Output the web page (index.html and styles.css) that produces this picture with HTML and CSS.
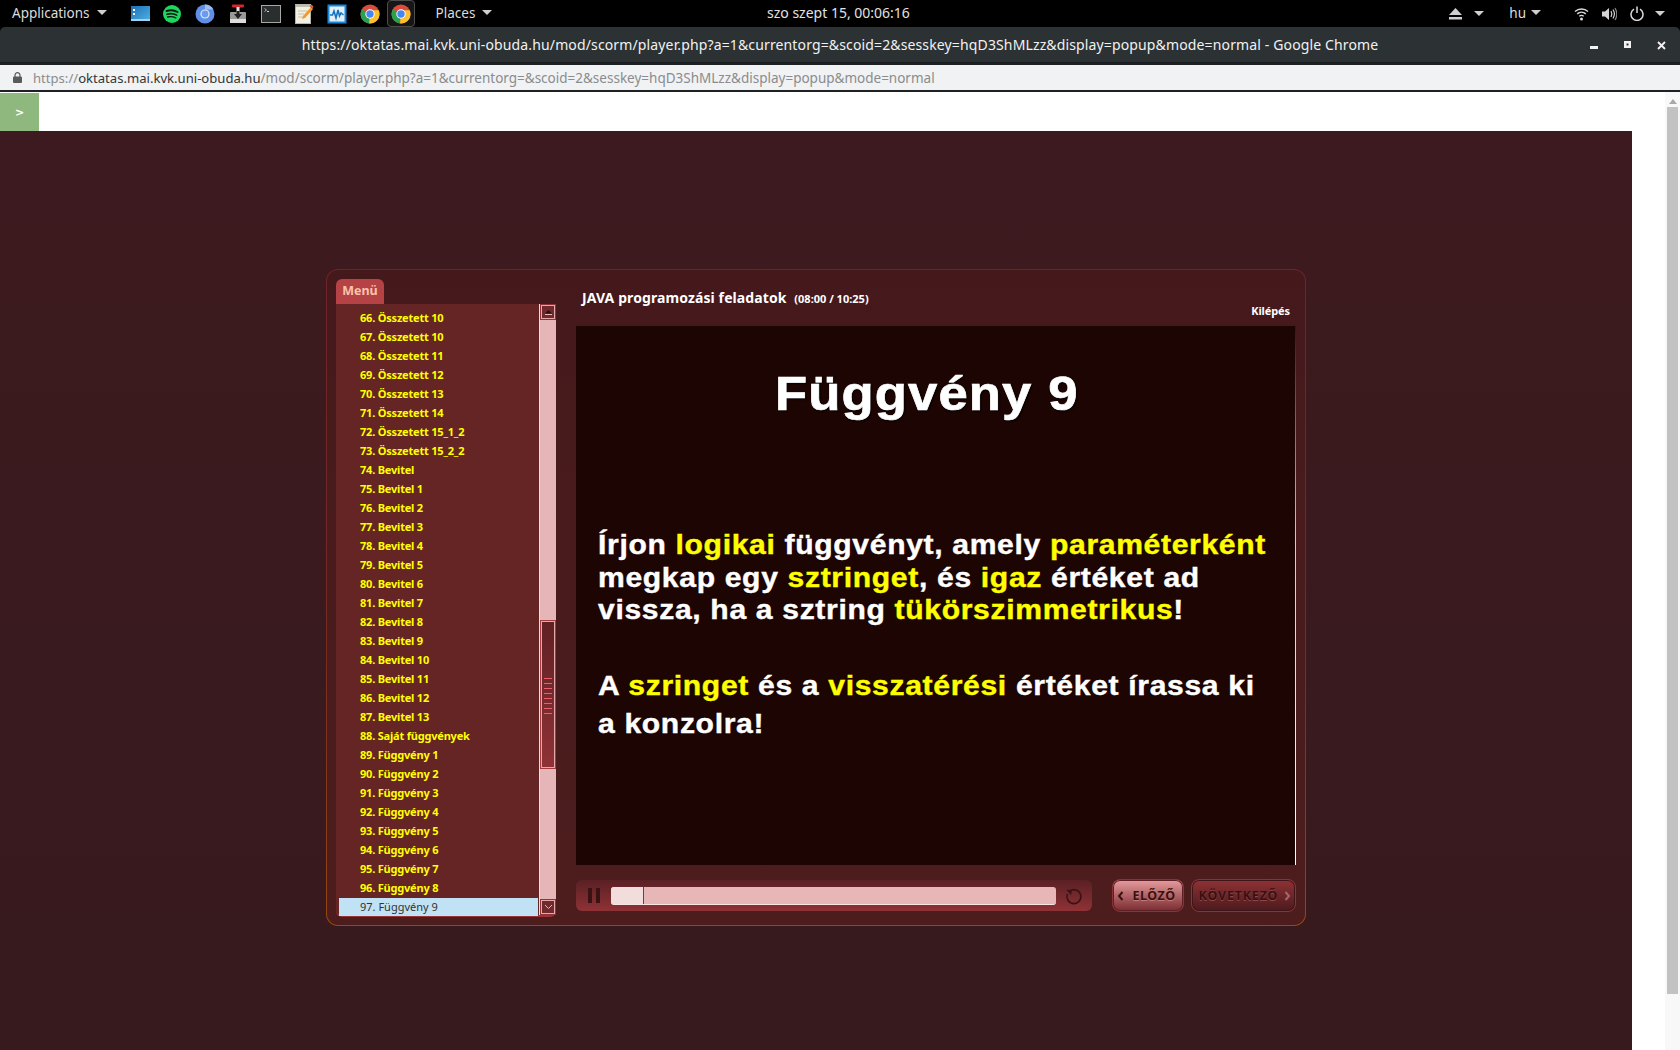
FILE: index.html
```html
<!DOCTYPE html>
<html lang="hu">
<head>
<meta charset="utf-8">
<title>Függvény 9</title>
<link rel="stylesheet" href="styles.css">
</head>
<body>
<header class="topbar">
  <div class="topbar-left">
    <span class="shell-menu">Applications <i class="caret"></i></span>
    <div class="launcher">
      <span class="app app-first"><svg width="20" height="18" viewBox="0 0 20 18"><defs><linearGradient id="fm" x1="0" y1="0" x2="1" y2="1"><stop offset="0" stop-color="#1c6fb5"/><stop offset="1" stop-color="#4fb2e6"/></linearGradient></defs><rect x="0" y="1" width="19" height="15" fill="url(#fm)"/><rect x="0" y="14" width="19" height="2" fill="#9fd3ee"/><rect x="2" y="4" width="2" height="2" fill="#fff"/><rect x="2" y="8" width="2" height="2" fill="#fff"/></svg></span>
      <span class="app"><svg width="20" height="20" viewBox="0 0 20 20"><circle cx="10" cy="10" r="9" fill="#1ed760"/><g fill="none" stroke="#0b1a10" stroke-linecap="round"><path d="M4.500 7C8 6 12.500 6.200 15.500 8" stroke-width="1.900"/><path d="M5 10.200C8 9.400 12 9.700 14.700 11.100" stroke-width="1.600"/><path d="M5.600 13C8 12.400 11.300 12.600 13.800 13.900" stroke-width="1.300"/></g></svg></span>
      <span class="app"><svg width="20" height="20" viewBox="0 0 20 20"><circle cx="10" cy="10" r="9.500" fill="#5f8fe6"/><path d="M10 .5a9.500 9.500 0 0 1 8.300 5H10z" fill="#9dbdf3"/><circle cx="10" cy="10" r="4.600" fill="#dfe9fb"/><circle cx="10" cy="10" r="3.400" fill="#6b9cec"/></svg></span>
      <span class="app"><svg width="20" height="20" viewBox="0 0 20 20"><rect x="2" y="8" width="16" height="11" rx="1" fill="#9a9a96"/><rect x="2" y="15" width="16" height="4" fill="#ddd"/><rect x="4" y="0.500" width="12" height="3" rx="1" fill="#d8262c"/><rect x="8.500" y="3" width="3" height="6" fill="#e3e3e0"/><path d="M6 10h2.500V7h3v3H14l-4 5z" fill="#222"/></svg></span>
      <span class="app"><svg width="20" height="20" viewBox="0 0 20 20"><rect x="0.500" y="1.500" width="19" height="17" fill="#2a2e2e" stroke="#a6a8a6"/><path d="M3.500 4.500l2 1.500-2 1.500" fill="none" stroke="#cfd3d0" stroke-width=".8"/><rect x="6" y="7" width="2" height="1" fill="#cfd3d0"/></svg></span>
      <span class="app"><svg width="20" height="22" viewBox="0 0 20 22"><rect x="1.500" y="1.500" width="15" height="19" fill="#f2efe3" stroke="#b9b5a6"/><path d="M1.500 3h15" stroke="#8d8a80" stroke-width="2" stroke-dasharray="1 1"/><path d="M4 8h9M4 11h6M4 14h5" stroke="#c7c3b2"/><path d="M8 16l1-3 8-9 2 2-8 9z" fill="#ee9b2c"/><path d="M15.500 3l2-1.500 2 2-1 2z" fill="#e0584a"/></svg></span>
      <span class="app"><svg width="20" height="20" viewBox="0 0 20 20"><rect x="0.500" y="0.500" width="19" height="19" fill="#1b86d8"/><rect x="2.500" y="2.500" width="15" height="15" fill="#dff0fb"/><path d="M3 11h2.500l1.500-4 2 7 2-8 1.500 6 1.500-3 2.500 2" fill="none" stroke="#1573bd" stroke-width="1.600"/></svg></span>
      <span class="app"><svg width="20" height="20" viewBox="0 0 20 20"><use href="#chrome"/></svg></span>
      <span class="app app-active"><svg width="20" height="20" viewBox="0 0 20 20"><use href="#chrome"/></svg></span>
    </div>
    <span class="shell-menu places">Places <i class="caret"></i></span>
  </div>
  <div class="clock">szo szept 15, 00:06:16</div>
  <div class="topbar-right">
    <span class="tray-item tray-eject"><svg width="13" height="12" viewBox="0 0 13 12"><path d="M6.500 0L13 7H0z" fill="#cfcfcf"/><rect y="9" width="13" height="2.500" fill="#cfcfcf"/></svg><i class="caret"></i></span>
    <span class="tray-item lang">hu <i class="caret"></i></span>
    <span class="tray-item tray-sys">
      <svg width="15" height="14" viewBox="0 0 15 14"><g fill="none" stroke="#dcdcdc" stroke-width="1.400"><path d="M1 4.500c3.700-3.300 9.300-3.300 13 0"/><path d="M3.200 6.900c2.500-2.200 6.100-2.200 8.600 0"/><path d="M5.300 9.200c1.300-1 3.100-1 4.400 0"/></g><circle cx="7.500" cy="12" r="1.500" fill="#dcdcdc"/></svg>
      <svg width="15" height="14" viewBox="0 0 15 14"><path d="M0 4.500h3L7 1v12L3 9.500H0z" fill="#d4d4d4"/><g fill="none" stroke="#d4d4d4" stroke-width="1.200"><path d="M9 4c1 1.800 1 4.200 0 6"/><path d="M11 2.500c1.700 2.700 1.700 6.300 0 9"/><path d="M13 1c2.200 3.600 2.200 8.400 0 12" stroke="#888"/></g></svg>
      <span class="power"><svg width="14" height="15" viewBox="0 0 14 15"><path d="M4 3.200a6 6 0 1 0 6 0" fill="none" stroke="#dcdcdc" stroke-width="1.500"/><path d="M7 0.500v6.500" stroke="#dcdcdc" stroke-width="1.500"/></svg><i class="caret"></i></span>
    </span>
  </div>
</header>

<div class="titlebar">
  <div class="window-title">https://oktatas.mai.kvk.uni-obuda.hu/mod/scorm/player.php?a=1&amp;currentorg=&amp;scoid=2&amp;sesskey=hqD3ShMLzz&amp;display=popup&amp;mode=normal - Google Chrome</div>
  <div class="window-buttons">
    <svg width="8" height="8" viewBox="0 0 8 8"><rect y="5" width="8" height="3" fill="#f2f2f2"/></svg>
    <svg width="7" height="7" viewBox="0 0 7 7"><rect width="7" height="7" fill="#f2f2f2"/><rect x="2.500" y="2.500" width="2" height="2" fill="#2c3134"/></svg>
    <svg width="9" height="9" viewBox="0 0 9 9"><path d="M1 1l7 7M8 1L1 8" stroke="#f2f2f2" stroke-width="1.800"/></svg>
  </div>
</div>

<div class="addressbar">
  <svg class="lock" width="9" height="11" viewBox="0 0 9 11"><path d="M2 5V3.200a2.500 2.500 0 0 1 5 0V5" fill="none" stroke="#5a5a5a" stroke-width="1.200"/><rect y="4.500" width="9" height="6.500" rx="1" fill="#5a5a5a"/></svg>
  <span class="url"><span class="url-dim url-scheme">https://</span><span class="url-host">oktatas.mai.kvk.uni-obuda.hu</span><span class="url-dim">/mod/scorm/player.php?a=1&amp;currentorg=&amp;scoid=2&amp;sesskey=hqD3ShMLzz&amp;display=popup&amp;mode=normal</span></span>
</div>

<div class="viewport">
  <main class="page">
    <div class="toc-strip"><button class="toc-toggle">&gt;</button></div>
    <div class="stage">
      <section class="player">
        <aside class="menu">
          <div class="menu-tab">Menü</div>
          <div class="menu-box">
            <ul class="menu-list">
              <li>66. Összetett 10</li><li>67. Összetett 10</li><li>68. Összetett 11</li><li>69. Összetett 12</li>
              <li>70. Összetett 13</li><li>71. Összetett 14</li><li>72. Összetett 15_1_2</li><li>73. Összetett 15_2_2</li>
              <li>74. Bevitel</li><li>75. Bevitel 1</li><li>76. Bevitel 2</li><li>77. Bevitel 3</li>
              <li>78. Bevitel 4</li><li>79. Bevitel 5</li><li>80. Bevitel 6</li><li>81. Bevitel 7</li>
              <li>82. Bevitel 8</li><li>83. Bevitel 9</li><li>84. Bevitel 10</li><li>85. Bevitel 11</li>
              <li>86. Bevitel 12</li><li>87. Bevitel 13</li><li>88. Saját függvények</li><li>89. Függvény 1</li>
              <li>90. Függvény 2</li><li>91. Függvény 3</li><li>92. Függvény 4</li><li>93. Függvény 5</li>
              <li>94. Függvény 6</li><li>95. Függvény 7</li><li>96. Függvény 8</li><li class="current">97. Függvény 9</li>
            </ul>
            <div class="menu-scroll">
              <span class="menu-arrow"><svg width="9" height="6" viewBox="0 0 9 6"><path d="M4.500 1L8 4.500H1z" fill="#2d0d0f"/><path d="M1 5.500h7" stroke="#e6b8b8"/></svg></span>
              <div class="menu-track">
                <div class="menu-thumb"><span class="grip"></span></div>
              </div>
              <span class="menu-arrow"><svg width="9" height="6" viewBox="0 0 9 6"><path d="M1 1l3.500 3.500L8 1" fill="none" stroke="#e6b8b8" stroke-width="1"/></svg></span>
            </div>
          </div>
        </aside>
        <div class="lesson">
          <div class="lesson-head">
            <h1 class="lesson-title">JAVA programozási feladatok <small>(08:00 / 10:25)</small></h1>
            <a class="exit">Kilépés</a>
          </div>
          <div class="slide">
            <h2 class="slide-title">Függvény 9</h2>
            <p class="slide-p1">Írjon <b>logikai</b> függvényt, amely <b>paraméterként</b><br>megkap egy <b>sztringet</b>, és <b>igaz</b> értéket ad<br>vissza, ha a sztring <b>tükörszimmetrikus</b>!</p>
            <p class="slide-p2">A <b>szringet</b> és a <b>visszatérési</b> értéket írassa ki<br>a konzolra!</p>
          </div>
          <div class="controls">
            <div class="playbar">
              <span class="pause"><i></i><i></i></span>
              <div class="progress"><div class="progress-fill"></div></div>
              <svg class="reload" width="18" height="18" viewBox="0 0 18 18"><path d="M5.500 3.500A7 7 0 1 1 2.400 7" fill="none" stroke="#3b1214" stroke-width="1.600"/><path d="M1 3h5.500v5z" fill="#3b1214" transform="rotate(8 4 5)"/></svg>
            </div>
            <button class="nav nav-prev"><svg width="7" height="10" viewBox="0 0 7 10"><path d="M5.500 1L2 5l3.500 4" fill="none" stroke="#3b1012" stroke-width="2"/></svg>ELŐZŐ</button>
            <button class="nav nav-next">KÖVETKEZŐ<svg width="7" height="10" viewBox="0 0 7 10"><path d="M1.500 1L5 5 1.500 9" fill="none" stroke="#a0686a" stroke-width="2"/></svg></button>
          </div>
        </div>
      </section>
    </div>
  </main>
  <div class="page-gap"></div>
  <div class="page-scroll">
    <svg width="8" height="7" viewBox="0 0 8 7"><path d="M4 1l4 5H0z" fill="#a8a8a8"/></svg>
    <div class="page-thumb"></div>
  </div>
</div>

<svg class="defs" width="0" height="0"><defs>
  <g id="chrome">
    <circle cx="10" cy="10" r="9.500" fill="#dd4b3e"/>
    <path d="M10 10L1.800 5.200A9.500 9.500 0 0 0 9 19.450z" fill="#2aa14f"/>
    <path d="M10 10L9 19.450A9.500 9.500 0 0 0 18.800 6.300H10z" fill="#fbc02d"/>
    <circle cx="10" cy="10" r="4.700" fill="#fff"/>
    <circle cx="10" cy="10" r="3.700" fill="#4586f3"/>
  </g>
</defs></svg>
</body>
</html>
```

FILE: styles.css
```css
* { box-sizing: border-box; }
html, body { margin: 0; padding: 0; height: 100%; }
body {
  width: 1680px;
  height: 1050px;
  overflow: hidden;
  display: flex;
  flex-direction: column;
  background: #000;
  font-family: "Noto Sans", sans-serif;
}

/* shell */
.topbar {
  height: 27px;
  flex: none;
  background: #000;
  color: #dcdcdc;
  font-size: 13.5px;
  display: flex;
  align-items: center;
  position: relative;
}
.topbar-left { display: flex; align-items: center; padding-left: 12px; }
.shell-menu { display: flex; align-items: center; gap: 7px; white-space: nowrap; margin-top: -2px; }
.places { margin-left: 21px; }
.caret {
  display: inline-block;
  width: 0;
  height: 0;
  border-left: 5px solid transparent;
  border-right: 5px solid transparent;
  border-top: 5px solid #cfcfcf;
}
.launcher { display: flex; align-items: center; margin-left: 20px; }
.app {
  width: 33px;
  height: 27px;
  display: flex;
  align-items: center;
  justify-content: center;
}
.app-first { width: 29px; }
.app-active {
  width: 28px;
  border: 1px solid #4d4d4d;
  border-radius: 4px;
  background: #161616;
}
.clock { position: absolute; left: 767px; top: 3px; font-size: 14px; white-space: nowrap; color: #e2e2e2; }
.topbar-right { margin-left: auto; display: flex; align-items: center; padding-right: 15px; }
.tray-item { display: flex; align-items: center; gap: 11px; }
.tray-eject { gap: 12px; }
.lang { margin-left: 25px; gap: 5px; margin-top: -2px; }
.tray-sys { margin-left: 33px; gap: 13px; margin-top: 0; }
.power { display: flex; align-items: center; gap: 11px; }

.titlebar {
  height: 36px;
  flex: none;
  background: #2c3134;
  border-radius: 5px 5px 0 0;
  color: #f1f1f1;
  font-size: 14px;
  letter-spacing: .135px;
  position: relative;
  display: flex;
  align-items: center;
  justify-content: center;
  border-bottom: 1px solid #1a1d1f;
}
.window-title { white-space: nowrap; }
.window-buttons {
  position: absolute;
  right: 14px;
  top: 14px;
  display: flex;
  align-items: flex-start;
  gap: 26px;
}

.addressbar {
  height: 29px;
  flex: none;
  background: #f1f2f4;
  border-top: 2px solid #1e2123;
  border-bottom: 2px solid #1e2123;
  display: flex;
  align-items: center;
  padding-left: 13px;
  font-size: 13.5px;
}
.lock { margin-right: 11px; }
.url { white-space: nowrap; }
.url-dim { color: #8a8c8e; }
.url-scheme, .url-host { font-size: 13.1px; }
.url-host { color: #33363a; }

/* page */
.viewport { flex: 1; min-height: 0; display: flex; background: #fff; }
.page { width: 1632px; flex: none; display: flex; flex-direction: column; }
.page-gap { flex: 1; }
.page-scroll {
  width: 15px;
  flex: none;
  background: #f8f8f8;
  display: flex;
  flex-direction: column;
  align-items: center;
  padding-top: 6px;
  gap: 2px;
}
.page-thumb { width: 11px; height: 887px; background: #c2c2c2; }
.toc-strip { height: 39px; flex: none; background: #fff; padding-top: 1px; }
.toc-toggle {
  display: block;
  width: 39px;
  height: 38px;
  padding: 0;
  border: 0;
  background: #8fb87e;
  color: #fff;
  font: bold 11px "DejaVu Sans", sans-serif;
}
.stage {
  flex: 1;
  background: linear-gradient(#3d1a1f, #371a1e);
  padding: 138px 0 0 326px;
}

.player {
  width: 980px;
  height: 657px;
  display: flex;
  background: linear-gradient(#45191c, #4d1d1d) padding-box, linear-gradient(#6d2429 0, #7a2c22 60%, #97480f 100%) border-box;
  border: 1px solid transparent;
  border-radius: 12px;
  padding: 9px 9px 8px 9px;
}

/* menu */
.menu { width: 220px; flex: none; display: flex; flex-direction: column; }
.menu-tab {
  width: 48px;
  height: 25px;
  flex: none;
  background: #b54245;
  border-radius: 6px 6px 0 0;
  color: #f8c4ab;
  font: bold 12.5px/24px "Noto Sans", sans-serif;
  text-align: center;
}
.menu-box {
  flex: 1;
  min-height: 0;
  display: flex;
  background: #662525;
  border-radius: 0 0 6px 6px;
  border-bottom: 2px solid #9a3438;
}
.menu-list {
  width: 204px;
  flex: none;
  margin: 0;
  padding: 5px 1px 0 3px;
  list-style: none;
  border-right: 1px solid #f5dddd;
}
.menu-list li {
  height: 19px;
  padding-left: 21px;
  color: #ffff00;
  font: bold 11px/17px "Noto Sans", sans-serif;
  letter-spacing: -.2px;
  white-space: nowrap;
}
.menu-list li.current {
  height: 18px;
  background: #c0e2f4;
  color: #333;
  font-weight: 400;
  line-height: 17px;
  letter-spacing: 0;
}
.menu-scroll {
  width: 16px;
  flex: none;
  display: flex;
  flex-direction: column;
  background: #e5b5b7;
}
.menu-arrow {
  height: 16px;
  flex: none;
  display: flex;
  align-items: center;
  justify-content: center;
  background: #702a2e;
  border: 1px solid #8f3338;
  box-shadow: inset 0 0 0 1px #e5a9ab;
}
.menu-track { flex: 1; min-height: 0; padding-top: 300px; }
.menu-thumb {
  height: 149px;
  background: linear-gradient(#5f2024, #8f3236);
  border: 1px solid #a33a3f;
  box-shadow: inset 0 0 0 1px #e5a9ab;
  display: flex;
  justify-content: center;
  padding-top: 57px;
}
.grip {
  width: 8px;
  height: 36px;
  background: repeating-linear-gradient(#e8606a 0, #e8606a 1px, transparent 1px, transparent 5px);
}

/* lesson */
.lesson { flex: 1; min-width: 0; display: flex; flex-direction: column; padding-left: 20px; }
.lesson-head {
  height: 47px;
  flex: none;
  display: flex;
  justify-content: space-between;
  color: #fff;
}
.lesson-title {
  margin: 9px 0 0 6px;
  font: bold 14px/20px "Noto Sans", sans-serif;
  letter-spacing: .1px;
}
.lesson-title small { font-size: 11px; margin-left: 4px; letter-spacing: 0; }
.exit {
  font: bold 11px/16px "Noto Sans", sans-serif;
  letter-spacing: -.1px;
  margin: 24px 6px 0 0;
}
.slide {
  height: 539px;
  flex: none;
  background: #1c0502;
  border-right: 1px solid;
  border-image: linear-gradient(#3a1212 0, #d8c8c8 40%, #ffffff 100%) 1;
  font-family: "Liberation Sans", Arial, sans-serif;
  font-weight: 700;
  color: #fff;
  padding: 0 22px;
  overflow: hidden;
}
.slide-title {
  width: max-content;
  margin: 40px 0 0 177px;
  font-size: 48px;
  line-height: 56px;
  letter-spacing: 1px;
  white-space: nowrap;
  text-shadow: 1px 1px 2px #000;
  -webkit-text-stroke: .7px #fff;
  transform: scaleX(1.097);
  transform-origin: left top;
}
.slide-p1, .slide-p2 {
  width: max-content;
  margin: 0;
  font-size: 27px;
  letter-spacing: .6px;
  white-space: nowrap;
  -webkit-text-stroke: .4px;
  transform: scaleX(1.114);
  transform-origin: left top;
}
.slide-p1 { margin-top: 107px; line-height: 32.5px; }
.slide-p2 { margin-top: 40px; line-height: 38.5px; }
.slide b { color: #ffff00; }

.controls { flex: 1; display: flex; align-items: flex-start; padding-top: 14px; }
.playbar {
  width: 516px;
  height: 31px;
  margin-top: 1px;
  flex: none;
  border-radius: 6px;
  background: linear-gradient(#5a2024, #8f3236);
  display: flex;
  align-items: center;
  padding: 0 9px 0 12px;
}
.pause { display: flex; gap: 4px; }
.pause i { width: 4px; height: 15px; background: #3b1214; display: block; }
.progress {
  width: 446px;
  height: 18px;
  margin-left: 11px;
  background: #e7b7b8;
  border-radius: 3px;
  border-bottom: 1px solid #f6e6e6;
  overflow: hidden;
}
.progress-fill { width: 33px; height: 100%; background: #f3dcdc; border-right: 1px solid #8f3236; }
.reload { margin-left: 9px; flex: none; }
.nav {
  height: 33px;
  border: 1px solid #8d3237;
  border-radius: 8px;
  display: flex;
  align-items: center;
  justify-content: space-between;
  font: bold 12.5px "Noto Sans", sans-serif;
  color: #3b1012;
}
.nav-prev {
  width: 72px;
  margin-left: 20px;
  padding: 0 7px 0 4px;
  letter-spacing: .5px;
  background: linear-gradient(#e69c9e, #7a2c30);
  box-shadow: inset 0 0 0 1px #5e2024;
  text-shadow: 0 1px 0 #c07a7c;
}
.nav-next {
  width: 106px;
  margin-left: 7px;
  padding: 0 4px 0 7px;
  letter-spacing: .8px;
  background: linear-gradient(#8f3236, #4c1a1d);
  box-shadow: inset 0 0 0 1px #3e1518;
  text-shadow: 0 1px 0 #8a4a4c;
}
.defs { position: absolute; }
```
